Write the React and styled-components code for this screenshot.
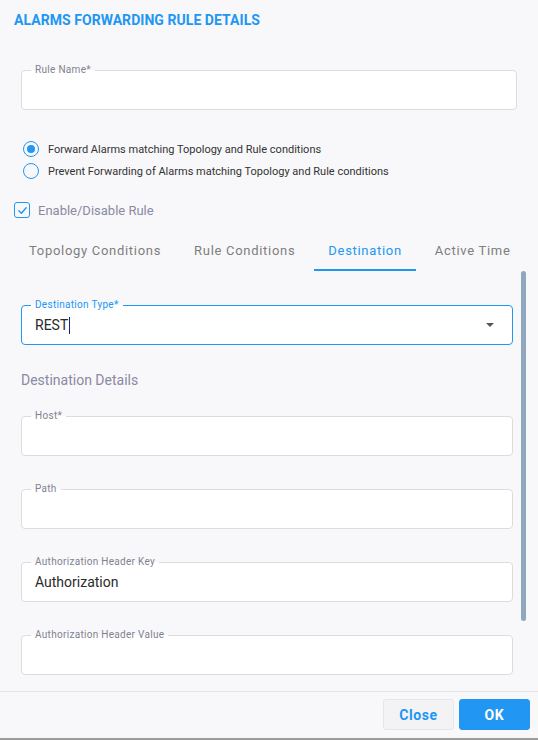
import React from "react";
import styled, { createGlobalStyle } from "styled-components";

const GlobalStyle = createGlobalStyle`
  html, body { margin: 0; padding: 0; }
  body {
    font-family: Roboto, "Liberation Sans", Arial, sans-serif;
    background: #f8f8fa;
  }
`;

const BLUE = "#2196f3";

const Dialog = styled.div`
  width: 538px;
  height: 740px;
  box-sizing: border-box;
  background: #f8f8fa;
  border-bottom: 2px solid #9c9c9c;
  display: flex;
  flex-direction: column;
`;

const Title = styled.h2`
  margin: 0;
  padding: 12px 14px 0;
  font-size: 14px;
  line-height: 17px;
  font-weight: 700;
  color: ${BLUE};
  letter-spacing: 0.05px;
`;

const Top = styled.div`
  padding: 0 21px;
`;

const FieldBox = styled.div`
  position: relative;
  height: 40px;
  box-sizing: border-box;
  border: 1px solid ${(p) => (p.$focused ? BLUE : "#dcdce0")};
  border-radius: 4px;
  background: #fff;
  display: flex;
  align-items: center;
  padding: 0 14px 0 13px;
  margin-top: ${(p) => p.$top || 0}px;
`;

const Legend = styled.span`
  position: absolute;
  top: -7px;
  left: 9px;
  padding: 0 4px;
  font-size: 10px;
  line-height: 12px;
  letter-spacing: 0.3px;
  color: ${(p) => (p.$focused ? BLUE : "#808290")};
  background: linear-gradient(#f8f8fa 50%, #fff 50%);
`;

const Value = styled.span`
  flex: 1;
  font-size: 14px;
  color: #2a2a2a;
  display: flex;
  align-items: center;
`;

const Caret = styled.span`
  display: inline-block;
  width: 1px;
  height: 17px;
  background: #1a237e;
  margin-left: 1px;
`;

const Arrow = styled.span`
  width: 0;
  height: 0;
  border-left: 4px solid transparent;
  border-right: 4px solid transparent;
  border-top: 4px solid #555;
  margin-right: 4px;
`;

const RadioGroup = styled.div`
  margin-top: 31px;
  padding-left: 23px;
  display: flex;
  flex-direction: column;
  gap: 6px;
`;

const RadioRow = styled.label`
  display: flex;
  align-items: center;
  gap: 9px;
  font-size: 11px;
  color: #333;
  height: 16px;
`;

const RadioCircle = styled.span`
  width: 16px;
  height: 16px;
  box-sizing: border-box;
  border-radius: 50%;
  border: 1.5px solid ${BLUE};
  display: flex;
  align-items: center;
  justify-content: center;
  &::after {
    content: "";
    width: 8px;
    height: 8px;
    border-radius: 50%;
    background: ${(p) => (p.$checked ? BLUE : "transparent")};
  }
`;

const CheckRow = styled.label`
  margin-top: 23px;
  padding-left: 14px;
  display: flex;
  align-items: center;
  gap: 8px;
  font-size: 13px;
  color: #8b89a3;
`;

const CheckBox = styled.span`
  width: 16px;
  height: 16px;
  box-sizing: border-box;
  border: 1.5px solid ${BLUE};
  border-radius: 3px;
  display: flex;
  align-items: center;
  justify-content: center;
`;

const Tabs = styled.div`
  margin-top: 16px;
  padding-left: 15px;
  display: flex;
  gap: 5px;
`;

const Tab = styled.div`
  padding: 9px 14px 11px;
  font-size: 13px;
  line-height: 15px;
  letter-spacing: 0.7px;
  color: ${(p) => (p.$active ? BLUE : "#7e7e7e")};
  border-bottom: 2px solid ${(p) => (p.$active ? BLUE : "transparent")};
`;

const Body = styled.div`
  flex: 1;
  min-height: 0;
  display: flex;
`;

const Scroll = styled.div`
  flex: 1;
  min-width: 0;
  overflow: hidden;
  padding: 34px 8px 0 21px;
`;

const Track = styled.div`
  width: 5px;
  margin: 0 12px 0 0;
  padding-bottom: 70px;
  display: flex;
`;

const Thumb = styled.div`
  flex: 1;
  border-radius: 3px;
  background: #8fa8bf;
`;

const Section = styled.div`
  margin: 27px 0 28px;
  font-size: 14px;
  line-height: 16px;
  color: #8b89a3;
`;

const Fields = styled.div`
  display: flex;
  flex-direction: column;
  gap: 33px;
`;

const Footer = styled.div`
  border-top: 1px solid #e3e3e8;
  height: 47px;
  display: flex;
  justify-content: flex-end;
  align-items: flex-start;
  gap: 5px;
  padding: 7px 8px 0 0;
  box-sizing: border-box;
`;

const Button = styled.button`
  width: 71px;
  height: 31px;
  border-radius: 3px;
  font-family: inherit;
  font-size: 14px;
  font-weight: 700;
  letter-spacing: 0.6px;
  cursor: pointer;
  border: 1px solid ${(p) => (p.$primary ? BLUE : "#e6e6ea")};
  background: ${(p) => (p.$primary ? BLUE : "#f3f3f5")};
  color: ${(p) => (p.$primary ? "#fff" : BLUE)};
`;

const TextField = ({ label, value, focused, top, children }) => (
  <FieldBox $focused={focused} $top={top}>
    <Legend $focused={focused}>{label}</Legend>
    <Value>{value}{children}</Value>
  </FieldBox>
);

const tabs = ["Topology Conditions", "Rule Conditions", "Destination", "Active Time"];

export default function App() {
  return (
    <>
      <GlobalStyle />
      <Dialog>
        <Title>ALARMS FORWARDING RULE DETAILS</Title>
        <Top>
          <TextField label="Rule Name*" top={41} />
        </Top>
        <RadioGroup>
          <RadioRow>
            <RadioCircle $checked />
            Forward Alarms matching Topology and Rule conditions
          </RadioRow>
          <RadioRow>
            <RadioCircle />
            Prevent Forwarding of Alarms matching Topology and Rule conditions
          </RadioRow>
        </RadioGroup>
        <CheckRow>
          <CheckBox>
            <svg width="11" height="11" viewBox="0 0 12 12" fill="none">
              <path d="M2 6.2 L4.8 9 L10 3" stroke={BLUE} strokeWidth="1.5" strokeLinecap="round" strokeLinejoin="round" />
            </svg>
          </CheckBox>
          Enable/Disable Rule
        </CheckRow>
        <Tabs>
          {tabs.map((t) => (
            <Tab key={t} $active={t === "Destination"}>{t}</Tab>
          ))}
        </Tabs>
        <Body>
          <Scroll>
            <FieldBox $focused>
              <Legend $focused>Destination Type*</Legend>
              <Value>REST<Caret /></Value>
              <Arrow />
            </FieldBox>
            <Section>Destination Details</Section>
            <Fields>
              <TextField label="Host*" />
              <TextField label="Path" />
              <TextField label="Authorization Header Key" value="Authorization" />
              <TextField label="Authorization Header Value" />
            </Fields>
          </Scroll>
          <Track>
            <Thumb />
          </Track>
        </Body>
        <Footer>
          <Button>Close</Button>
          <Button $primary>OK</Button>
        </Footer>
      </Dialog>
    </>
  );
}
